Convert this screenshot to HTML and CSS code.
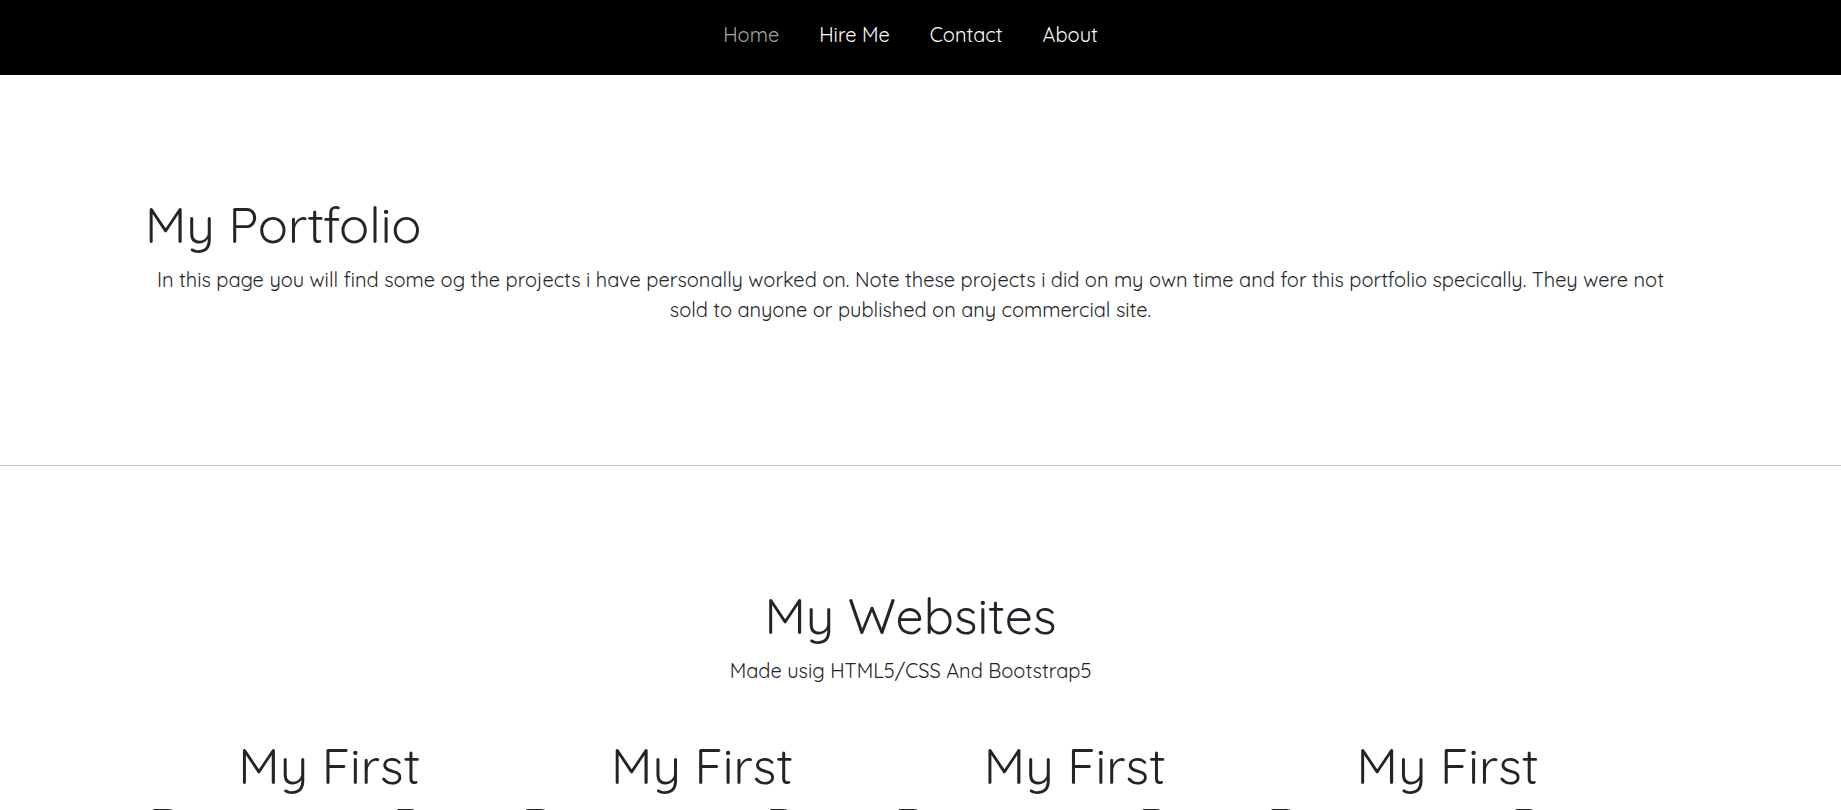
FILE: index.html
```html
<!DOCTYPE html>
<html lang="en">
<head>
<meta charset="utf-8">
<meta name="viewport" content="width=device-width, initial-scale=1">
<title>My Portfolio</title>
<link rel="stylesheet" href="styles.css">
</head>
<body>
<nav class="navbar">
  <a class="nav-link active" href="#home">Home</a>
  <a class="nav-link" href="#hire">Hire Me</a>
  <a class="nav-link" href="#contact">Contact</a>
  <a class="nav-link" href="#about">About</a>
</nav>
<main>
  <section class="section intro">
    <h1 class="title">My Portfolio</h1>
    <p class="text">In this page you will find some og the projects i have personally worked on. Note these projects i did on my own time and for this portfolio specically. They were not sold to anyone or published on any commercial site.</p>
  </section>
  <section class="section websites">
    <h1 class="title centered">My Websites</h1>
    <p class="text">Made usig HTML5/CSS And Bootstrap5</p>
    <div class="cards">
      <h1 class="title centered">My First Bootstrap Page</h1>
      <h1 class="title centered">My First Bootstrap Page</h1>
      <h1 class="title centered">My First Bootstrap Page</h1>
      <h1 class="title centered">My First Bootstrap Page</h1>
    </div>
  </section>
</main>
</body>
</html>
```
FILE: styles.css
```css
* { box-sizing: border-box; }
html { overflow-x: hidden; scrollbar-width: none; }
body {
  margin: 0;
  background: #fff;
  color: #212529;
  font-family: Quicksand, Lato, sans-serif;
  font-size: 20px;
  font-weight: 400;
  line-height: 30px;
}
.navbar {
  display: flex;
  justify-content: center;
  gap: 40px;
  padding: 20px 20px 25px 0;
  background: #000;
}
.nav-link {
  color: #fff;
  text-decoration: none;
}
.nav-link.active { color: #a6a6a6; }
.section { padding: 120px 165px 120px 145px; }
.intro { border-bottom: 1px solid #c8c8c8; }
.title {
  margin: 0 0 10px;
  font-size: 50px;
  font-weight: 400;
  line-height: 60px;
}
.centered { text-align: center; }
.text { margin: 0 0 20px; text-align: center; }
.cards {
  display: grid;
  grid-template-columns: repeat(4, 1fr);
  margin: 0 42px 0 -2px;
  padding-top: 30px;
}
```
